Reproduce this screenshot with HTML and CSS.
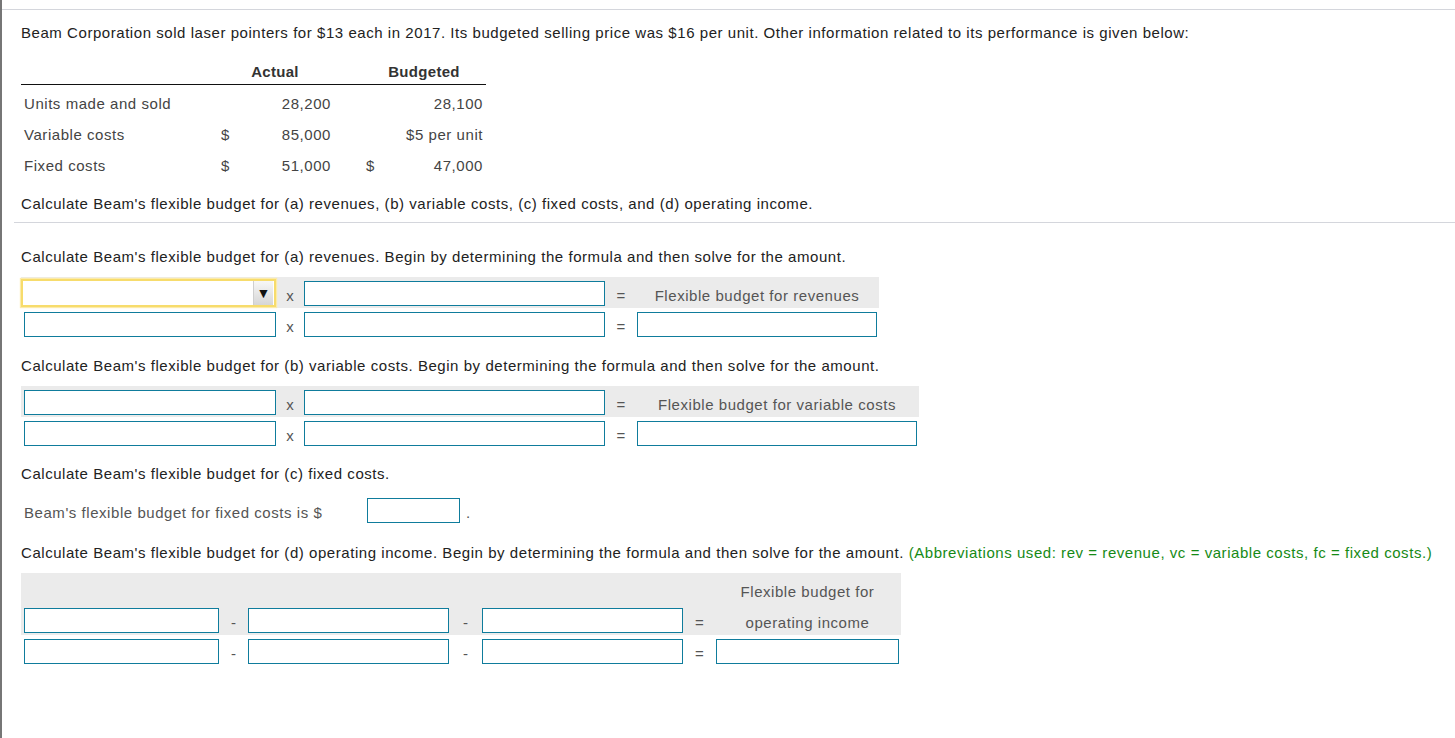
FILE: index.html
```html
<!DOCTYPE html>
<html>
<head>
<meta charset="utf-8">
<title>Flexible budget</title>
<link rel="stylesheet" href="styles.css">
</head>
<body>
<div class="page">
  <div class="topline"></div>
  <div class="content">
    <p class="para intro">Beam Corporation sold laser pointers for $13 each in 2017. Its budgeted selling price was $16 per unit. Other information related to its performance is given below:</p>

    <div class="data-head">
      <div class="h-blank"></div>
      <div class="h-actual">Actual</div>
      <div class="h-budget">Budgeted</div>
    </div>
    <div class="data-body">
      <div class="lbl">Units made and sold</div><div class="cur"></div><div class="val">28,200</div><div class="cur2"></div><div class="val2">28,100</div>
      <div class="lbl">Variable costs</div><div class="cur">$</div><div class="val">85,000</div><div class="cur2"></div><div class="val2">$5 per unit</div>
      <div class="lbl">Fixed costs</div><div class="cur">$</div><div class="val">51,000</div><div class="cur2">$</div><div class="val2">47,000</div>
    </div>

    <p class="para q-all">Calculate Beam's flexible budget for (a) revenues, (b) variable costs, (c) fixed costs, and (d) operating income.</p>
    <div class="divider"></div>

    <p class="para q-a">Calculate Beam's flexible budget for (a) revenues. Begin by determining the formula and then solve for the amount.</p>
    <div class="formula">
      <div class="frow shaded">
        <div class="select">
          <div class="select-btn">&#9660;</div>
        </div>
        <div class="op op-x">x</div>
        <div class="box w301"></div>
        <div class="op op-eq">=</div>
        <div class="result w240">Flexible budget for revenues</div>
      </div>
      <div class="frow">
        <div class="box w252"></div>
        <div class="op op-x">x</div>
        <div class="box w301"></div>
        <div class="op op-eq">=</div>
        <div class="box w240"></div>
      </div>
    </div>

    <p class="para q-b">Calculate Beam's flexible budget for (b) variable costs. Begin by determining the formula and then solve for the amount.</p>
    <div class="formula">
      <div class="frow shaded">
        <div class="box w252"></div>
        <div class="op op-x">x</div>
        <div class="box w301"></div>
        <div class="op op-eq">=</div>
        <div class="result w280">Flexible budget for variable costs</div>
      </div>
      <div class="frow">
        <div class="box w252"></div>
        <div class="op op-x">x</div>
        <div class="box w301"></div>
        <div class="op op-eq">=</div>
        <div class="box w280"></div>
      </div>
    </div>

    <p class="para q-c">Calculate Beam's flexible budget for (c) fixed costs.</p>
    <div class="fixed-row">
      <div class="fixed-lbl">Beam's flexible budget for fixed costs is $</div>
      <div class="box w93"></div>
      <div class="dot">.</div>
    </div>

    <p class="para q-d">Calculate Beam's flexible budget for (d) operating income. Begin by determining the formula and then solve for the amount. <span class="hint">(Abbreviations used: rev = revenue, vc = variable costs, fc = fixed costs.)</span></p>
    <div class="formula">
      <div class="frow shaded tall">
        <div class="box w195"></div>
        <div class="op op-m1">-</div>
        <div class="box w201"></div>
        <div class="op op-m2">-</div>
        <div class="box w201"></div>
        <div class="op op-m2">=</div>
        <div class="result w183 two-line">
          <div class="line1">Flexible budget for</div>
          <div class="line2">operating income</div>
        </div>
      </div>
      <div class="frow">
        <div class="box w195"></div>
        <div class="op op-m1">-</div>
        <div class="box w201"></div>
        <div class="op op-m2">-</div>
        <div class="box w201"></div>
        <div class="op op-m2">=</div>
        <div class="box w183"></div>
      </div>
    </div>
  </div>
</div>
</body>
</html>
```

FILE: styles.css
```css
html, body {
  margin: 0;
  padding: 0;
  background: #ffffff;
}

body {
  font-family: "Liberation Sans", Arial, sans-serif;
  font-size: 15px;
  letter-spacing: 0.55px;
  color: #333333;
}

.page {
  border-left: 2px solid #767676;
  min-height: 738px;
  box-sizing: border-box;
  padding-top: 9px;
}

.topline {
  border-top: 1px solid #d4d6dc;
}

.content {
  padding-left: 19px;
}

.para {
  margin: 0;
  line-height: 20px;
  color: #222222;
  white-space: nowrap;
}

.intro { margin-top: 13px; }

/* data table */
.data-head,
.data-body {
  display: grid;
  grid-template-columns: 180px 40px 92px 40px 113px;
  width: 465px;
}

.data-head {
  margin-top: 14px;
  border-bottom: 1px solid #111111;
}

.data-head > div {
  padding: 5px 0 2px;
  line-height: 20px;
  font-weight: bold;
  color: #333333;
  letter-spacing: 0.3px;
}

.h-actual {
  grid-column: 2 / 4;
  text-align: center;
  padding-left: 16px !important;
}

.h-budget {
  grid-column: 4 / 6;
  text-align: center;
  padding-left: 29px !important;
}

.data-body {
  padding-top: 3px;
}

.data-body > div {
  line-height: 31px;
  height: 31px;
  color: #444444;
}

.lbl { padding-left: 3px; }
.cur { padding-left: 20px; }
.cur2 { padding-left: 33px; }
.val { text-align: right; padding-right: 2px; }
.val2 { text-align: right; padding-right: 3px; }

.q-all { margin-top: 13px; }

.divider {
  margin-top: 8px;
  margin-left: -7px;
  border-top: 1px solid #d4d6dc;
}

.q-a { margin-top: 24px; }
.q-b { margin-top: 17px; }
.q-c { margin-top: 16px; }
.q-d { margin-top: 18px; }

.hint { color: #168a16; }

/* formulas */
.formula {
  margin-top: 10px;
  width: max-content;
}

.frow {
  display: flex;
  align-items: flex-end;
  height: 31px;
  box-sizing: border-box;
  padding: 4px 2px 2px 3px;
}

.frow.shaded { background: #ebebeb; }
.frow.tall { height: 62px; }

.box {
  height: 25px;
  box-sizing: border-box;
  border: 1px solid #0f7c9c;
  background: #ffffff;
}

.w93 { width: 93px; }
.w183 { width: 183px; }
.w195 { width: 195px; }
.w201 { width: 201px; }
.w240 { width: 240px; }
.w252 { width: 252px; }
.w280 { width: 280px; }
.w301 { width: 301px; }

.select {
  width: 255px;
  height: 28px;
  margin: -2px 0 -1px -3px;
  box-sizing: border-box;
  border: 2px solid #f7dc6c;
  box-shadow: 0 0 1px 1px #fcebaa;
  background: #ffffff;
  display: flex;
  justify-content: flex-end;
  padding: 0 1px 0 0;
}

.select-btn {
  width: 20px;
  height: 24px;
  box-sizing: border-box;
  border-left: 1px solid #cfcfcf;
  background: linear-gradient(#f7f7f7, #d6d6d6);
  color: #111111;
  font-size: 14px;
  letter-spacing: 0;
  line-height: 24px;
  text-align: center;
}

.op {
  line-height: 20px;
  text-align: center;
  color: #555555;
  letter-spacing: 0;
}

.op-x { width: 28px; }
.op-eq { width: 32px; }
.op-m1 { width: 29px; }
.op-m2 { width: 33px; }

.result {
  line-height: 20px;
  text-align: center;
  color: #555555;
}

.two-line .line1 { margin-bottom: 11px; }

.fixed-row {
  margin-top: 10px;
  display: flex;
  align-items: flex-end;
  padding: 4px 0 2px 3px;
}

.fixed-lbl {
  width: 343px;
  line-height: 20px;
  color: #555555;
}

.dot {
  line-height: 20px;
  margin-left: 6px;
  color: #555555;
}
```
